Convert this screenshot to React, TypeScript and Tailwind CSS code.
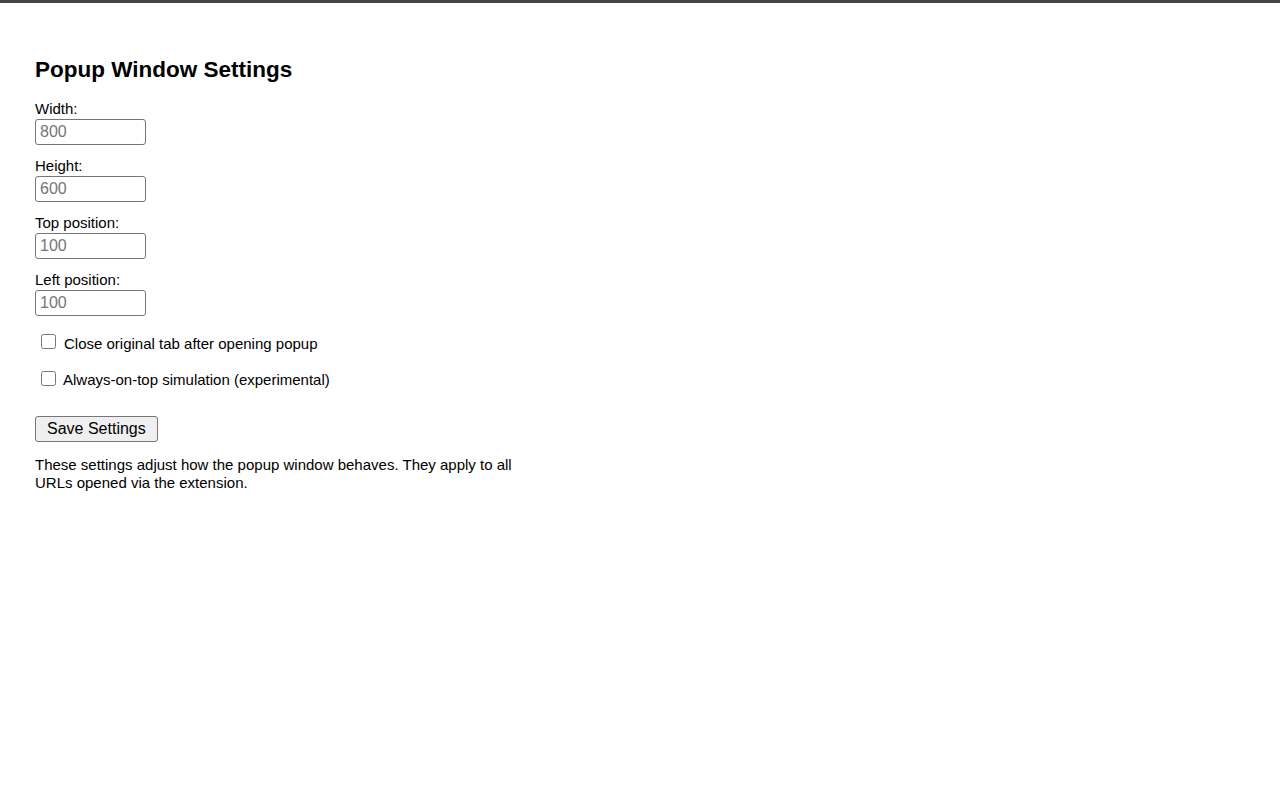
import { useState } from "react";

const fields = [
  { label: "Width:", placeholder: "800" },
  { label: "Height:", placeholder: "600" },
  { label: "Top position:", placeholder: "100" },
  { label: "Left position:", placeholder: "100" },
];

export default function App() {
  const [closeTab, setCloseTab] = useState(false);
  const [onTop, setOnTop] = useState(false);

  return (
    <div
      className="min-h-screen border-t-[3px] border-[#464646] bg-white text-black"
      style={{ fontFamily: '"Liberation Sans", Arial, sans-serif' }}
    >
      <div className="w-[535px] px-[35px] pt-[53px]">
        <h2 className="mb-[17px] text-[22.5px] font-bold leading-[27px]">
          Popup Window Settings
        </h2>

        {/* Campos */}
        {fields.map((f) => (
          <div key={f.label} className="mb-[12px]">
            <label className="block text-[15px] leading-[18px]">{f.label}</label>
            <input
              type="number"
              placeholder={f.placeholder}
              className="mt-[1px] block h-[26px] w-[111px] rounded-[3px] border border-[#767676] px-[4px] text-[16px] leading-[24px] outline-none placeholder:text-[#757575]"
            />
          </div>
        ))}

        {/* Opções */}
        <label className="mt-[19px] flex h-[18px] items-center text-[15px] leading-[18px]">
          <input
            type="checkbox"
            checked={closeTab}
            onChange={(e) => setCloseTab(e.target.checked)}
            className="ml-[6px] mr-[8px] h-[15px] w-[15px] -translate-y-[3px]"
          />
          Close original tab after opening popup
        </label>

        <label className="mt-[18px] flex h-[18px] items-center text-[15px] leading-[18px]">
          <input
            type="checkbox"
            checked={onTop}
            onChange={(e) => setOnTop(e.target.checked)}
            className="ml-[6px] mr-[7px] h-[15px] w-[15px] -translate-y-[2px]"
          />
          Always-on-top simulation (experimental)
        </label>

        <button className="mt-[27px] block h-[26px] rounded-[3px] border border-[#767676] bg-[#efefef] px-[11px] text-[16px] leading-[24px]">
          Save Settings
        </button>

        <p className="mt-[14px] w-[490px] text-[15px] leading-[18px]">
          These settings adjust how the popup window behaves. They apply to all
          URLs opened via the extension.
        </p>
      </div>
    </div>
  );
}
